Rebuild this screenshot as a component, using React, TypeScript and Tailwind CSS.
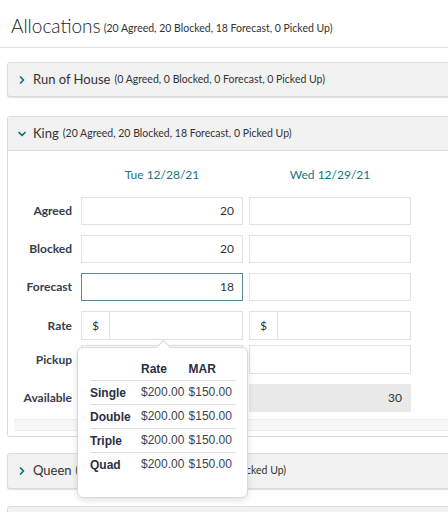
import { ChevronRight, ChevronDown } from "lucide-react";

const rows = [
  { label: "Agreed", a: "20", top: "mt-[13px]" },
  { label: "Blocked", a: "20", top: "mt-[10px]" },
  { label: "Forecast", a: "18", top: "mt-[10px]", focus: true },
];

const rates = ["Single", "Double", "Triple", "Quad"];

function PanelHeader({ name, summary, open }: { name: string; summary: string; open?: boolean }) {
  return (
    <div className="flex items-center h-full pl-[8px] text-[#333]">
      {open ? (
        <ChevronDown className="w-[12px] h-[12px] text-[#0e6f78]" strokeWidth={3.5} />
      ) : (
        <ChevronRight className="w-[12px] h-[12px] text-[#0e6f78]" strokeWidth={3.5} />
      )}
      <span className="ml-[5px] text-[13px]">{name}</span>
      <span className="ml-[4px] text-[10.5px] text-[#333]">{summary}</span>
    </div>
  );
}

function Box({ children, className = "border-[#e2e2e2]" }: { children?: React.ReactNode; className?: string }) {
  return (
    <div className={`h-[28px] w-[162px] border flex items-center justify-end pr-[8px] text-[12px] text-[#333] ${className}`}>
      {children}
    </div>
  );
}

function Label({ text }: { text: string }) {
  return <div className="w-[64px] text-right text-[12px] font-bold text-[#363d4f]">{text}</div>;
}

export default function App() {
  return (
    <div className="w-[448px] h-[512px] overflow-hidden bg-white relative" style={{ fontFamily: "Lato, 'Open Sans', sans-serif" }}>
      <div className="h-[48px] border-b border-[#e3e3e8] flex items-center pl-[11px] pt-[6px]">
        <span className="text-[19px] font-light text-[#222]">Allocations</span>
        <span className="ml-[3px] mt-[5px] text-[10.5px] text-[#333]">(20 Agreed, 20 Blocked, 18 Forecast, 0 Picked Up)</span>
      </div>

      <div className="pl-[7px] w-[480px]">
        <div className="mt-[14px] h-[35px] bg-[#f2f2f2] border border-[#dcdcdc] rounded-[3px] shadow-[0_1px_1px_rgba(0,0,0,0.12)]">
          <PanelHeader name="Run of House" summary="(0 Agreed, 0 Blocked, 0 Forecast, 0 Picked Up)" />
        </div>

        <div className="mt-[19px] border border-[#dcdcdc] rounded-[3px] h-[321px] flex flex-col">
          <div className="h-[34px] bg-[#f2f2f2] border-b border-[#dcdcdc]">
            <PanelHeader name="King" summary="(20 Agreed, 20 Blocked, 18 Forecast, 0 Picked Up)" open />
          </div>
          <div className="flex pl-[73px] gap-[6px] mt-[15px] text-[12px] text-[#157580]">
            <div className="w-[162px] text-center">Tue 12/28/21</div>
            <div className="w-[162px] text-center">Wed 12/29/21</div>
          </div>

          {rows.map((r) => (
            <div key={r.label} className={`flex items-center ${r.top}`}>
              <Label text={r.label} />
              <div className="ml-[9px] flex gap-[6px]">
                <Box className={r.focus ? "border-[#5a8c8e]" : "border-[#e2e2e2]"}>{r.a}</Box>
                <Box />
              </div>
            </div>
          ))}

          <div className="flex items-center mt-[10px]">
            <Label text="Rate" />
            <div className="ml-[9px] flex gap-[6px]">
              {[0, 1].map((i) => (
                <div key={i} className="h-[29px] w-[162px] border border-[#e2e2e2] flex text-[12px] text-[#333]">
                  <div className="w-[28px] border-r border-[#e2e2e2] flex items-center pl-[10px]">$</div>
                </div>
              ))}
            </div>
          </div>

          <div className="flex items-center mt-[5px]">
            <Label text="Pickup" />
            <div className="ml-[9px] flex gap-[6px]">
              <Box className="h-[29px] border-[#e2e2e2]" />
              <Box className="h-[29px] border-[#e2e2e2]" />
            </div>
          </div>

          <div className="flex items-center mt-[10px]">
            <Label text="Available" />
            <div className="ml-[9px] flex gap-[6px]">
              <Box className="bg-[#e9e9e9] border-[#e9e9e9]" />
              <Box className="bg-[#e9e9e9] border-[#e9e9e9]">30</Box>
            </div>
          </div>

          <div className="ml-[6px] mt-[7px] h-[12px] bg-[#f7f7f7] border-y border-[#ececec]" />
        </div>

        <div className="mt-[16px] h-[36px] bg-[#f2f2f2] border border-[#dcdcdc] rounded-[3px] shadow-[0_1px_1px_rgba(0,0,0,0.12)]">
          <PanelHeader name="Queen" summary="(0 Agreed, 0 Blocked, 0 Forecast, 0 Picked Up)" />
        </div>

        <div className="mt-[17px] h-[36px] bg-[#f2f2f2] border border-[#dcdcdc] rounded-[3px]" />
      </div>

      {/* rate popover */}
      <div
        className="absolute left-[77px] top-[347px] w-[171px] h-[151px] bg-white border border-[#d8d8d8] rounded-[6px] shadow-[0_2px_6px_rgba(0,0,0,0.12)] text-[#2a3042]"
        style={{ fontFamily: "'Liberation Sans', Arial, sans-serif" }}
      >
        <div className="absolute -top-[6px] left-[80px] w-[11px] h-[11px] bg-white border-l border-t border-[#d8d8d8] rotate-45" />
        <table className="relative ml-[12px] mt-[10px] w-[146px] text-[12px] border-collapse">
          <thead>
            <tr className="h-[22px] border-b border-[#dedede]">
              <th className="w-[50px]" />
              <th className="text-left font-bold pl-[1px]">Rate</th>
              <th className="text-left font-bold">MAR</th>
            </tr>
          </thead>
          <tbody>
            {rates.map((r, i) => (
              <tr key={r} className={`h-[24px] ${i < 3 ? "border-b border-[#dedede]" : ""}`}>
                <td className="font-bold pt-[2px]">{r}</td>
                <td className="pl-[1px] text-[#3a3f50]">$200.00</td>
                <td className="text-[#3a3f50]">$150.00</td>
              </tr>
            ))}
          </tbody>
        </table>
      </div>
    </div>
  );
}
